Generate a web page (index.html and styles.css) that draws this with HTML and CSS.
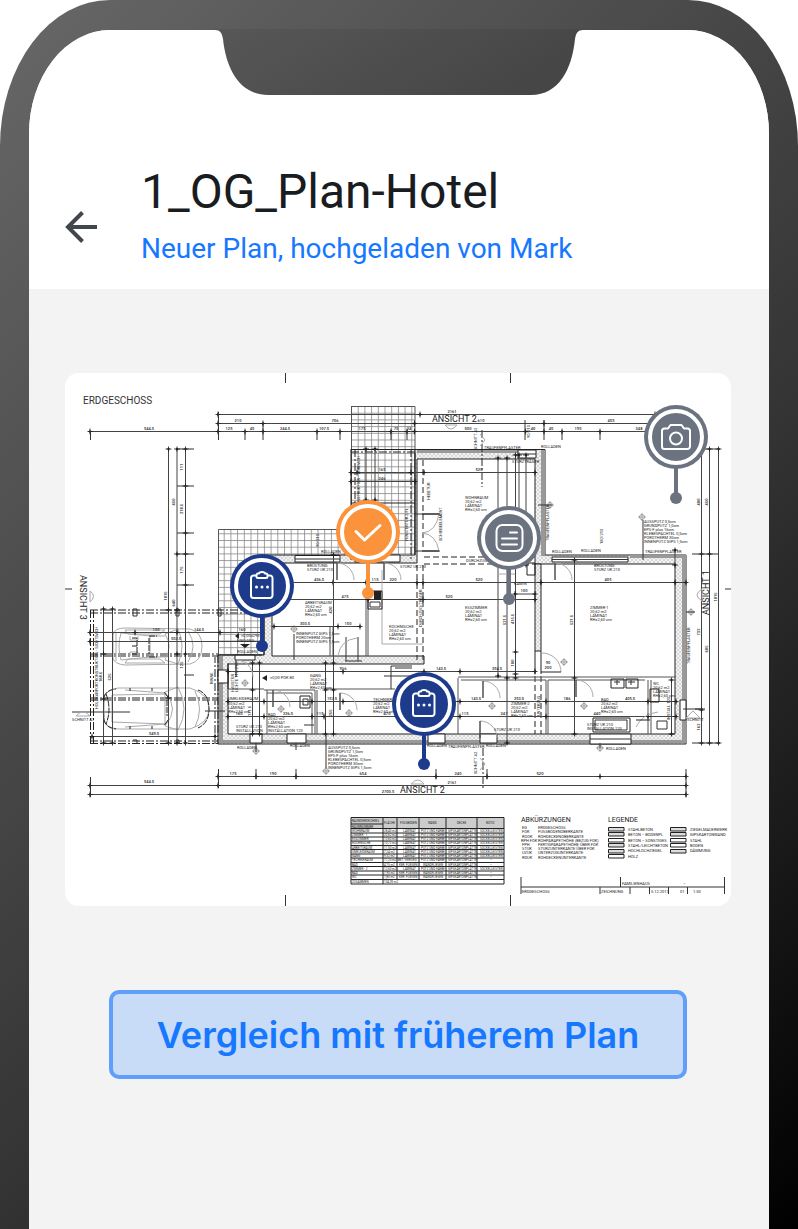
FILE: index.html
```html
<!DOCTYPE html>
<html lang="de">
<head>
<meta charset="utf-8">
<meta name="viewport" content="width=device-width, initial-scale=1">
<title>1_OG_Plan-Hotel</title>
<link rel="stylesheet" href="styles.css">
</head>
<body>
<div class="phone">
  <svg class="notch" viewBox="0 0 368 67" aria-hidden="true">
    <defs><linearGradient id="ng" x1="0" y1="0" x2="1" y2="0.3"><stop offset="0" stop-color="#575757"/><stop offset="1" stop-color="#464646"/></linearGradient></defs>
    <path d="M0 0H368V1C363 1 361 4 360 10C357 40 344 66 316 66H53C25 66 11 40 8 10C7 4 5 1 0 1Z" fill="url(#ng)"/>
  </svg>
  <div class="screen">
    <header class="header">
      <button class="back" type="button" aria-label="Zurück">
        <svg viewBox="0 0 32 32"><path d="M32 16H3M17.500 1.500L3 16L17.500 30.500"/></svg>
      </button>
      <div class="titles">
        <h1>1_OG_Plan-Hotel</h1>
        <p>Neuer Plan, hochgeladen von Mark</p>
      </div>
    </header>
    <main class="content">
      <div class="plan">
        <svg class="drawing" viewBox="65 373 666 533" role="img" aria-label="Grundriss Erdgeschoss">
          <defs>
            <pattern id="grid" x="351" y="406" width="6.700" height="6.700" patternUnits="userSpaceOnUse"><path d="M0 .5H7M.5 0V7" stroke="#888" stroke-width=".8" fill="none"/></pattern>
            <pattern id="hatch" width="4" height="4" patternUnits="userSpaceOnUse"><rect width="4" height="4" fill="#f4f4f4"/><path d="M0 4L4 0M0 0L4 4" stroke="#c4c4c4" stroke-width=".6"/></pattern>
            <marker id="t" markerWidth="8" markerHeight="8" refX="4" refY="4" orient="auto" markerUnits="userSpaceOnUse"><path d="M4 1V7M1.500 4H6.500" stroke="#111" stroke-width=".8"/><circle cx="4" cy="4" r="1.200"/></marker>
            <g id="target"><circle r="2.500"/><path d="M-4 0H4M0-4V4"/></g>
            <g id="note" class="tiny"><text>AUSSPUTZ 0,5cm</text><text y="4">GRUNDPUTZ 1,0cm</text><text y="8">EPS-F plus 16cm</text><text y="12">KLEBESPACHTEL 0,5cm</text><text y="16">POROTHERM 30cm</text><text y="20">INNENPUTZ GIPS 1,5cm</text></g>
            <g id="room" class="tiny"><text y="4">20,62 m2</text><text y="8">LAMINAT</text><text y="12">RH=2,60 cm</text></g>
            <g id="door"><path class="g" d="M0 17V0A17 17 0 0 1 17 17"/><path class="w" d="M0 0V17"/></g>
          </defs>

          <path class="l" d="M285.500 373V383M510.500 373V383M285.500 895V906M510.500 895V906M65 589H72M725 589H731"/>
          <text class="head" x="83" y="404">ERDGESCHOSS</text>

          <!-- paving -->
          <path fill="url(#grid)" d="M351 406H415V554H351ZM218 529H351V556H272V655H218Z"/>
          <path class="w2" d="M351 406.500H415V554M351.500 406V554M218.500 655V529.500H351"/>

          <!-- walls -->
          <path class="wall" d="M415 449.500H545V555H686V744H218V655H264V555H415ZM417 459V563H272V656H424V664H228V734H675V564H535V459Z"/>
          <path fill="#999" d="M417 450H518V453H417ZM541 450H545V556H541ZM630 555H686V558H630ZM682 558H686V740H682ZM218 740H686V743H218ZM219 655H223V740H219Z"/>
          <path class="hat" d="M535 564H541V651H535ZM535 651V674M541 651V674"/>
          <path class="d2" d="M535 676V734M541 676V734M417 565V660M423 565V660M424 557H535M424 564H535M423 460V550"/>
          <path class="w2" d="M264 690H315V734M267 693H312M267 690V734M312 693V734M317 690V734M324 689H395M458 678V734M461 680H546M458 677H676M548 680V734M546 680V734M548 680H645M648 680V734M651 680V734M330 627V656M333 627V656M368 563V656M366 596V656M228 689H264"/>
          <path class="w" fill="#fff" d="M295 555.500H340V562H295ZM355 555H400V562H355ZM552 557H628V562H552ZM518 450H536V458H518ZM235 655H255V660H235ZM250 734H262V743H250ZM287 734H306V743H287ZM428 734H445V743H428ZM480 734H497V743H480ZM590 734H631V744H590ZM680 700H686V720H680ZM218 670H228V683H218Z"/>
          <path class="l" d="M552 559.500H628M295 559H340M590 739H631M518 454H536M415 514H440M415 551H440M346 637V661M358 637V661M345 661H362M391 666H412M391 666V689M384 676H415M395 668H412"/>
          <path class="w" d="M415 453V555M351 449.500H415M351 503H415M264 555V655M351 449V560M218 655H262M228 663V689"/>
          <path class="d1" d="M351 452H415M355 449V560M411 449V560M482 430V487M483 748V790"/>

          <!-- carport -->
          <path class="d1" d="M90 610H262M90 613H262M90 654H218M90 656H218M90 698H218M90 700H218M90 741H218M90 743.500H218M90.500 610V744M93.500 610V744M215 655V744M218 655V744"/>
          <path class="l" d="M72 712H130M205 711H225M133 609V616H137V609ZM176 609V616H179V609ZM218 609V616H221V609ZM133 740H137V744M176 740H179V744"/>
          <g class="g">
            <path d="M113 635Q114 628 125 628L190 629Q202 632 202 646Q202 661 190 664L125 665Q114 664 113 658ZM121 633Q117 646 121 660L150 657V636ZM165 634Q173 646 165 660L178 664Q186 646 178 629ZM150 636H165M150 657H165M125 630H165L160 634H128ZM125 663H165L160 659H128ZM116 632V661M188 631Q198 646 188 662M130 636V640H138V636M130 656V652H138V656"/>
            <path d="M104 697Q106 690 118 688L190 688Q209 694 209 709Q209 723 190 729L118 729Q106 728 104 720ZM165 692Q180 709 165 726L178 730Q190 709 178 687ZM112 695V722L165 724V694ZM125 690L165 693M125 727L165 724M195 691Q204 709 195 727"/>
          </g>
          <path class="car" d="M104 697Q103 709 104 720M106 694Q112 709 106 724M104 697Q106 690 116 689M104 720Q106 728 116 729M168 697L164 692M168 720L164 726M167 700V716M198 690Q209 694 209 709Q209 723 198 728M130 688V691M152 688V691M130 729V726M152 729V726M132 638H137V654H132M149 638V654M132 646H137M149 636H157M149 657H157"/>

          <!-- dimension chains -->
          <g class="dim">
            <path d="M218 414.500H420H655"/><path d="M218 423.500H263H414.500H544H655"/>
            <path d="M90 431.500H218H245H263H317H340H391H407H414.500H525.500H544H562H600H652"/>
            <path d="M168.500 449V610V698V743"/><path d="M177 449V554V610V654V743"/><path d="M185.500 449V486V533V554V585V654V743"/>
            <path d="M701.500 449V554V710V743"/><path d="M709.500 449V554V743"/><path d="M718.500 449V743"/>
            <path d="M90 794.500H686"/><path d="M90 785.500H218H686"/><path d="M218 776.500H256H296H436H487H600H686"/>
            <path d="M351 472.500H357H411H424H535"/><path d="M351 481.500H415"/>
            <path d="M272 582.500H333H366H417H423H541H675H686"/><path d="M272 599.500H368H423H535"/>
            <path d="M228 671.500H343H424H460H535"/><path d="M228 701.500H264H312H343H395H460H546H648H676"/><path d="M228 716.500H264H312H324H460H546H648H676"/>
            <path d="M274 626.500H338H360"/><path d="M90 632.500H135H177H220H262"/><path d="M90 641.500H262"/><path d="M92 736.500H215"/>
            <path d="M103.500 609V654V699V743"/><path d="M112.500 609V743"/>
            <path d="M333.500 555V663V690V734"/><path d="M325.500 663V690V734"/><path d="M252.500 663V690V734"/><path d="M259.500 663V734"/>
            <path d="M507 458V563V678V743"/><path d="M515.500 455V652V674V678"/><path d="M574.500 560V678V734"/><path d="M498 458V676"/><path d="M519 455V565"/><path d="M526 455V565"/>
            <path d="M375 449V500"/><path d="M366 449V500"/><path d="M671.500 680V734"/><path d="M675 550V565"/><path d="M515 594H535"/>
          </g>
          <path class="l" d="M90.500 431V440M218.500 412V440M245 431V440M263 423V440M317 431V440M340 431V440M391 431V440M407 431V440M544 420V440M562 431V440M600 431V440M177 449H194M177 486H194M177 533H194M177 554H194M177 585H194M184 675H194M695 449H720M692 554H718M695 709H705M692 743H720M90.500 777V797M218.500 769V788M256 769V779M296 769V779M436 769V779M487 769V779M686 769V797"/>

          <g class="num">
            <text x="149" y="430">544.5</text><text x="238" y="422">210</text><text x="229" y="430">125</text><text x="252" y="430">45</text><text x="285" y="430">244.5</text><text x="335" y="422">706</text><text x="324" y="430">107.5</text><text x="362" y="430">175</text><text x="396" y="430">75</text><text x="409" y="430">24</text><text x="452" y="413">2161</text><text x="481" y="422">610</text><text x="468" y="430">500</text><text x="533" y="430">40</text><text x="551" y="430">45</text><text x="578" y="430">195</text><text x="611" y="422">455</text><text x="639" y="430">348</text>
            <text x="149" y="783">544.5</text><text x="233" y="775">175</text><text x="273" y="775">190</text><text x="363" y="775">654</text><text x="458" y="775">240</text><text x="540" y="775">520</text><text x="452" y="784">2161</text><text x="388" y="793">2700.5</text>
            <text x="319" y="581">436.5</text><text x="375" y="581">115</text><text x="393" y="581">220</text><text x="479" y="581">520</text><text x="608" y="581">405</text><text x="345" y="598">475</text><text x="449" y="598">520</text><text x="305" y="625">303.5</text><text x="348" y="625">150</text><text x="343" y="670">916</text><text x="441" y="670">143.5</text><text x="497" y="670">354.5</text><text x="332" y="700">157.5</text><text x="476" y="700">143.5</text><text x="519" y="700">253.5</text><text x="567" y="700">186</text><text x="630" y="700">405.5</text><text x="239" y="715">160</text><text x="288" y="715">226.5</text><text x="320" y="715">115</text><text x="387" y="715">470</text><text x="465" y="715">115</text><text x="504" y="715">247</text><text x="597" y="715">440</text><text x="154" y="735">549.5</text><text x="382" y="471">165</text><text x="382" y="480">246</text><text x="479" y="471">520</text><text x="156" y="631">130</text><text x="176" y="640">502.5</text><text x="242" y="631">160</text><text x="199" y="631">144.5</text><text x="524" y="592">100</text><text x="548" y="664">90</text><text x="548" y="669">200</text>
            <text transform="translate(183 467)rotate(-90)">111</text><text transform="translate(183 509)rotate(-90)">218.5</text><text transform="translate(175 502)rotate(-90)">450</text><text transform="translate(183 570)rotate(-90)">175</text><text transform="translate(167 596)rotate(-90)">1015</text><text transform="translate(175 603)rotate(-90)">640</text><text transform="translate(111 677)rotate(-90)">525</text><text transform="translate(102 677)rotate(-90)">168.5</text><text transform="translate(183 665)rotate(-90)">125</text><text transform="translate(506 620)rotate(-90)">521.5</text><text transform="translate(514 619)rotate(-90)">415.5</text><text transform="translate(573 620)rotate(-90)">521.5</text><text transform="translate(514 663)rotate(-90)">100</text><text transform="translate(332 610)rotate(-90)">420</text><text transform="translate(251 711)rotate(-90)">171.5</text><text transform="translate(332 713)rotate(-90)">255</text><text transform="translate(700 502)rotate(-90)">400</text><text transform="translate(708 502)rotate(-90)">450</text><text transform="translate(700 632)rotate(-90)">732</text><text transform="translate(708 649)rotate(-90)">605</text><text transform="translate(717 597)rotate(-90)">1015</text><text transform="translate(700 727)rotate(-90)">162</text>
          </g>

          <!-- view labels -->
          <text class="view" x="432" y="422">ANSICHT 2</text><text class="view" x="400" y="793">ANSICHT 2</text>
          <text class="view" transform="translate(80 575)rotate(90)">ANSICHT 3</text><text class="view" transform="translate(709 615)rotate(-90)">ANSICHT 1</text>
          <path class="g" d="M445 425Q451 433 457 425ZM411 784Q418 776 424 784ZM90 591Q97 596 90 602ZM702 589Q692 595 702 601ZM76 716Q83 708 90 716ZM686 718L693 711L700 718ZM480 434L485 440L480 446M480 758L485 764L480 770"/>

          <!-- interior symbols -->
          <use href="#door" x="337" y="563"/><use href="#door" x="384" y="563"/><use href="#door" x="555" y="563"/><use href="#door" x="340" y="693"/><use href="#door" x="273" y="690"/><use href="#door" x="483" y="681"/><use href="#door" x="576" y="680"/><use href="#door" x="236" y="660"/><use href="#door" x="480" y="721"/>
          <path class="g" d="M439 514Q436 532 422 533M439 551Q436 534 422 533M541 653A19 19 0 0 1 561 672M338 656Q340 640 357 638M382 570V644H423M498 574H515M636 727Q642 714 658 712"/>
          <path class="w" d="M541 672H561M439 514H422M439 551H422M527 563H535V575H527ZM368 591H382V609H368ZM611 679H624V688H611ZM626 679H638V688H626ZM650 689H659V702H650ZM300 696H310V708H300ZM593 718H630V732H593ZM636 720H650"/>
          <path fill="#222" d="M374 591H381V600H374ZM240 644H250L245 648ZM235 636L239 633V639ZM262 678L267 675V681Z"/>
          <path class="l" d="M370 602H380V607H370ZM617 680V685M631 680V685M614 682H620M628 682H635M303 699H308V705H303ZM595 720H627V730H595ZM657 721H667V729H657ZM304 725H314M643 560V520M552 505H538M686 612H695M326 734V768M294 634V660M683 709H703M525 440V420M296 743V750M256 743V752M600 743V748"/>
          <g class="sy"><use href="#target" x="550" y="505"/><use href="#target" x="642" y="517"/><use href="#target" x="691" y="612"/><use href="#target" x="326" y="771"/><use href="#target" x="294" y="629"/><use href="#target" x="245" y="683"/><use href="#target" x="281" y="709"/><use href="#target" x="349" y="713"/><use href="#target" x="492" y="706"/><use href="#target" x="584" y="706"/><use href="#target" x="564" y="662"/><use href="#target" x="256" y="751"/><use href="#target" x="600" y="748"/></g>

          <g class="tiny">
            <text x="465" y="499">WOHNRAUM</text><text x="305" y="604">ARBEITSRAUM</text><text x="465" y="609">ESSZIMMER</text><text x="590" y="609">ZIMMER-1</text><text x="389" y="628">KOCHNISCHE</text><text x="373" y="701">TECHNIKRAUM</text><text x="228" y="700">UMKLEIDERAUM</text><text x="310" y="677">GANG</text><text x="268" y="716">BAD</text><text x="511" y="705">ZIMMER-2</text><text x="601" y="701">BAD</text><text x="653" y="685">WC</text>
            <text x="484" y="449">TRAUFENPFLASTER</text><text x="645" y="553">TRAUFENPFLASTER</text><text x="448" y="748">TRAUFENPFLASTER</text><text x="541" y="448">ROLLADEN</text><text x="321" y="553">ROLLADEN</text><text x="581" y="552">ROLLADEN</text><text x="237" y="749">ROLLADEN</text><text x="290" y="747">ROLLADEN</text><text x="427" y="747">ROLLADEN</text><text x="486" y="747">ROLLADEN</text><text x="606" y="750">ROLLADEN</text><text x="552" y="553">ROLLADEN</text><text x="307" y="567">BRÜSTUNG</text><text x="307" y="571">STURZ UK 210</text><text x="400" y="568">STURZ UK 210</text><text x="512" y="463">STURZTRÄGER</text><text x="594" y="567">BRÜSTUNG</text><text x="594" y="571">STURZ UK 210</text><text x="587" y="726">STURZ UK 210</text><text x="587" y="730">INSTALLATION 120</text><text x="236" y="728">STURZ UK 210</text><text x="236" y="732">INSTALLATION</text><text x="268" y="732">INSTALLATION 120</text><text x="494" y="731">STURZ UK 210</text><text x="237" y="642">EINGANG</text><text x="237" y="653">ROLLADEN</text><text x="241" y="637">±0,00=295</text><text x="270" y="679">±0,00 POK 80</text><text x="296" y="635">INNENPUTZ GIPS 1,5cm</text><text x="296" y="639">POROTHERM 20cm</text><text x="296" y="643">INNENPUTZ GIPS 1,5cm</text><text x="466" y="562">DURCHZUG</text><text x="514" y="585">KAMIN</text><text x="72" y="721">SCHNITT A1</text><text x="687" y="721">SCHNITT</text>
            <text transform="translate(98 709)rotate(-90)">HOLZKARPORTKONSTRUKTION - SICHTDACH</text><text transform="translate(360 507)rotate(-90)">KONSTRUKTION - VORDACH</text><text transform="translate(549 541)rotate(-90)">TRAUFENPFLASTER</text><text transform="translate(690 664)rotate(-90)">TRAUFENPFLASTER</text><text transform="translate(477 450)rotate(-90)">SCHNITT A2</text><text transform="translate(477 774)rotate(-90)">SCHNITT A2</text><text transform="translate(430 500)rotate(-90)">HEBETÜR</text><text transform="translate(442 541)rotate(-90)">SCHIEBEELEMENT</text><text transform="translate(422 627)rotate(-90)">DURCHZUG/TRÄGER</text><text transform="translate(234 692)rotate(-90)">HAUSTÜR</text><text transform="translate(238 692)rotate(-90)">LICHTE 110/210</text><text transform="translate(213 684)rotate(-90)">RINNE</text><text transform="translate(408 541)rotate(-90)">FENSTERTÜR 2.FL</text><text transform="translate(540 716)rotate(-90)">UNTERZUG</text><text transform="translate(670 720)rotate(-90)">INSTALL 120</text><text transform="translate(530 438)rotate(-90)">90/210</text><text transform="translate(603 544)rotate(-90)">180/210</text><text transform="translate(319 547)rotate(-90)">90/210</text>
          </g>
          <use href="#room" x="465" y="499"/><use href="#room" x="305" y="604"/><use href="#room" x="465" y="609"/><use href="#room" x="590" y="609"/><use href="#room" x="389" y="628"/><use href="#room" x="373" y="701"/><use href="#room" x="228" y="701"/><use href="#room" x="310" y="677"/><use href="#room" x="268" y="716"/><use href="#room" x="511" y="705"/><use href="#room" x="601" y="701"/><use href="#room" x="653" y="685"/>
          <use href="#note" x="644" y="523"/><use href="#note" x="328" y="749"/>

          <!-- room schedule -->
          <path fill="#ccc" d="M351 817.500H504V828.500H351Z"/>
          <path class="w" d="M351 817.500H504V884H351ZM351 824H383M351 828.500H504M351 833H504M351 837H504M351 841H504M351 845.500H504M351 849.500H504M351 854H504M351 858H504M351 862.500H504M351 866.500H504M351 871H504M351 875H504M351 879.500H504M383 817V884M397 817V879.500M419 817V879.500M446 817V879.500M477 817V879.500"/>
          <g class="cell"><text x="352" y="822">RAUMVERZEICHNIS</text><text x="352" y="828">RAUMNUMMER</text><text x="384" y="824">FLÄCHE</text><text x="400" y="824">FUSSBODEN</text><text x="428" y="824">WAND</text><text x="457" y="824">DECKE</text><text x="486" y="824">NOTIZ</text>
            <text x="352" y="832">WOHNRAUM</text><text x="352" y="836">ZIMMER - 1</text><text x="352" y="840">ESSZIMMER</text><text x="352" y="844">KOCHNISCHE</text><text x="352" y="849">ARBEITSRAUM</text><text x="352" y="853">UMKLEIDERAUM</text><text x="352" y="857">GANG</text><text x="352" y="861">TECHNIKRAUM</text><text x="352" y="866">BAD</text><text x="352" y="870">ZIMMER - 2</text><text x="352" y="874">BAD</text><text x="352" y="878">WC</text><text x="352" y="883">ZUSAMMEN</text><text x="384" y="883">134,39 m2</text>
            <text x="384" y="832">28,40 m2</text><text x="384" y="836">20,62 m2</text><text x="384" y="840">13,60 m2</text><text x="384" y="844">10,72 m2</text><text x="384" y="849">11,50 m2</text><text x="384" y="853">7,24 m2</text><text x="384" y="857">9,32 m2</text><text x="384" y="861">11,20 m2</text><text x="384" y="866">4,15 m2</text><text x="384" y="870">12,60 m2</text><text x="384" y="874">7,90 m2</text><text x="384" y="878">1,80 m2</text>
            <text x="403" y="832">LAMINAT</text><text x="403" y="836">LAMINAT</text><text x="403" y="840">LAMINAT</text><text x="403" y="844">LAMINAT</text><text x="403" y="849">LAMINAT</text><text x="403" y="853">LAMINAT</text><text x="403" y="857">LAMINAT</text><text x="398" y="861">BET. VERSIEG.</text><text x="399" y="866">KER. FLIESEN</text><text x="403" y="870">LAMINAT</text><text x="399" y="874">KER. FLIESEN</text><text x="399" y="878">KER. FLIESEN</text>
            <text x="421" y="832">PUTZ UND FARBE</text><text x="421" y="836">PUTZ UND FARBE</text><text x="421" y="840">PUTZ UND FARBE</text><text x="421" y="844">PUTZ UND FARBE</text><text x="421" y="849">PUTZ UND FARBE</text><text x="421" y="853">PUTZ UND FARBE</text><text x="421" y="857">PUTZ UND FARBE</text><text x="421" y="861">PUTZ UND FARBE</text><text x="423" y="866">WANDFLIESEN</text><text x="421" y="870">PUTZ UND FARBE</text><text x="423" y="874">WANDFLIESEN</text><text x="423" y="878">WANDFLIESEN</text>
            <text x="448" y="832">GIPSKARTONPLATTE</text><text x="448" y="836">GIPSKARTONPLATTE</text><text x="448" y="840">GIPSKARTONPLATTE</text><text x="448" y="844">GIPSKARTONPLATTE</text><text x="448" y="849">GIPSKARTONPLATTE</text><text x="448" y="853">GIPSKARTONPLATTE</text><text x="448" y="857">GIPSKARTONPLATTE</text><text x="448" y="861">GIPSKARTONPLATTE</text><text x="448" y="866">GIPSKARTONPLATTE</text><text x="448" y="870">GIPSKARTONPLATTE</text><text x="448" y="874">GIPSKARTONPLATTE</text><text x="448" y="878">GIPSKARTONPLATTE</text>
            <text x="480" y="832">SOCKELLEISTEN</text><text x="480" y="836">SOCKELLEISTEN</text><text x="480" y="840">SOCKELLEISTEN</text><text x="480" y="844">SOCKELLEISTEN</text><text x="480" y="849">SOCKELLEISTEN</text><text x="480" y="853">SOCKELLEISTEN</text><text x="480" y="857">SOCKELLEISTEN</text><text x="490" y="861">–</text><text x="490" y="866">–</text><text x="480" y="870">SOCKELLEISTEN</text><text x="490" y="874">–</text><text x="490" y="878">–</text>
          </g>

          <!-- abbreviations and legend -->
          <text class="cap" x="521" y="822">ABKÜRZUNGEN</text><text class="cap" x="608" y="822">LEGENDE</text>
          <g class="tiny">
            <text x="522" y="829">EG</text><text x="538" y="829">ERDGESCHOSS</text><text x="522" y="833">FOK</text><text x="538" y="833">FUSSBODENOBERKANTE</text><text x="522" y="838">ROOK</text><text x="538" y="838">ROHDECKENOBERKANTE</text><text x="521" y="842">RPH FOK</text><text x="538" y="842">ROHPARAPETHÖHE (BEZUG FOK)</text><text x="522" y="846">FPH</text><text x="538" y="846">FERTIGPARAPETHÖHE ÜBER FOK</text><text x="522" y="850">STUK</text><text x="538" y="850">STURZUNTERKANTE ÜBER FOK</text><text x="522" y="854">UZUK</text><text x="538" y="854">UNTERZUGUNTERKANTE</text><text x="522" y="859">RDUK</text><text x="538" y="859">ROHDECKENUNTERKANTE</text>
            <text x="628" y="831">STAHLBETON</text><text x="628" y="836">BETON – BODENPL.</text><text x="628" y="842">BETON – SONSTIGES</text><text x="628" y="847">STAHL/LEICHTBETON</text><text x="628" y="852">HOCHLOCHZIEGEL</text><text x="628" y="858">HOLZ</text><text x="690" y="831">ZIEGELMAUERWERK</text><text x="690" y="836">GIPSKARTONWAND</text><text x="690" y="842">STAHL</text><text x="690" y="847">BODEN</text><text x="690" y="852">DÄMMUNG</text>
            <text x="522" y="893">ERDGESCHOSS</text><text x="601" y="893">ZEICHNUNG</text><text x="622" y="885">FAMILIENHAUS</text><text x="651" y="893">5.12.2017</text><text x="680" y="893">01</text><text x="693" y="893">1:50</text><text x="683" y="885">–</text>
          </g>
          <path class="w" fill="#fff" d="M608.500 838.500H624V842H608.500ZM608.500 854.500H624V858H608.500ZM670.500 838.500H686V842H670.500ZM670.500 843.500H686V847H670.500Z"/>
          <path class="w" fill="#ddd" d="M608.500 827.500H624V831H608.500ZM608.500 832.500H624V836H608.500ZM608.500 843.500H624V847H608.500ZM608.500 849.500H624V853H608.500ZM670.500 827.500H686V831H670.500ZM670.500 832.500H686V836H670.500ZM670.500 849.500H686V853H670.500Z"/>
          <path class="l" d="M521 877V894M620.500 877V887M724.500 877V894M521 887H724M600 887V894M630 887V894M649.500 887V894M668.500 887V894M687.500 887V894"/>
        </svg>

        <button class="pin slate camera" type="button" aria-label="Foto"><svg viewBox="-32 -32 64 100"><path class="stem" d="M0 28V62"/><circle class="dot" cy="61" r="6"/><circle class="disc" r="32"/><circle class="ring" r="26"/><path class="ic" d="M-11.500 -8.500H-8L-5.500 -12H5.500L8 -8.500H11.500A2.500 2.500 0 0 1 14 -6V9.500A2.500 2.500 0 0 1 11.500 12H-11.500A2.500 2.500 0 0 1 -14 9.500V-6A2.500 2.500 0 0 1 -11.500 -8.500Z"/><circle class="ic" cy="1.500" r="6"/></svg></button>
        <button class="pin orange done" type="button" aria-label="Erledigt"><svg viewBox="-32 -32 64 100"><path class="stem" d="M0 28V62"/><circle class="dot" cy="61" r="6"/><circle class="disc" r="32"/><circle class="ring" r="26"/><path class="ic bold" d="M-12 -.5L-3.500 8L12 -6.500"/></svg></button>
        <button class="pin slate form" type="button" aria-label="Formular"><svg viewBox="-32 -32 64 100"><path class="stem" d="M0 28V62"/><circle class="dot" cy="61" r="6"/><circle class="disc" r="32"/><circle class="ring" r="26"/><rect class="ic" x="-12.500" y="-13" width="26" height="26" rx="6"/><path class="ic" d="M1 -5.500H8M-7 .5H8M-7 6.500H8"/></svg></button>
        <button class="pin navy task-a" type="button" aria-label="Aufgabe 1"><svg viewBox="-32 -32 64 100"><path class="stem" d="M0 28V60"/><circle class="dot" cy="60" r="6"/><circle class="disc" r="32"/><circle class="ring" r="26"/><path class="ic" d="M-5.500 -10.500H-8.500A2.500 2.500 0 0 0 -11 -8V9.500A2.500 2.500 0 0 0 -8.500 12H8A2.500 2.500 0 0 0 10.500 9.500V-8A2.500 2.500 0 0 0 8 -10.500H5.500M-3 -12.500C-3 -14.500 3 -14.500 3 -12.500H4A1.500 1.500 0 0 1 5.500 -11V-9.500A1.500 1.500 0 0 1 4 -8H-4A1.500 1.500 0 0 1 -5.500 -9.500V-11A1.500 1.500 0 0 1 -4 -12.500Z"/><path class="ic dots" d="M-5.500 1H-5.500M0 1H0M5.500 1H5.500"/></svg></button>
        <button class="pin navy task-b" type="button" aria-label="Aufgabe 2"><svg viewBox="-32 -32 64 100"><path class="stem" d="M0 28V60"/><circle class="dot" cy="60" r="6"/><circle class="disc" r="32"/><circle class="ring" r="26"/><path class="ic" d="M-5.500 -10.500H-8.500A2.500 2.500 0 0 0 -11 -8V9.500A2.500 2.500 0 0 0 -8.500 12H8A2.500 2.500 0 0 0 10.500 9.500V-8A2.500 2.500 0 0 0 8 -10.500H5.500M-3 -12.500C-3 -14.500 3 -14.500 3 -12.500H4A1.500 1.500 0 0 1 5.500 -11V-9.500A1.500 1.500 0 0 1 4 -8H-4A1.500 1.500 0 0 1 -5.500 -9.500V-11A1.500 1.500 0 0 1 -4 -12.500Z"/><path class="ic dots" d="M-5.500 1H-5.500M0 1H0M5.500 1H5.500"/></svg></button>
      </div>
      <button class="compare" type="button">Vergleich mit früherem Plan</button>
    </main>
  </div>
</div>
</body>
</html>
```
FILE: styles.css
```css
* { box-sizing: border-box; }
body { margin: 0; background: #fff; font-family: Roboto, sans-serif; }
button { margin: 0; padding: 0; border: 0; background: none; font: inherit; cursor: pointer; }

.phone {
  position: relative;
  display: flex;
  min-height: 100vh;
  padding: 30px 29px 0;
  border-radius: 110px 110px 0 0 / 146px 146px 0 0;
  background: linear-gradient(135deg, #686868 0%, #333 60%, #000 100%);
}
.notch { position: absolute; top: 29px; left: 50%; width: 368px; transform: translateX(-50%); }
.screen {
  flex: 1;
  display: flex;
  flex-direction: column;
  overflow: hidden;
  border-radius: 81px 81px 0 0 / 104px 104px 0 0;
  background: #f3f3f3;
}
.header {
  display: flex;
  align-items: center;
  gap: 44px;
  padding: 134px 36px 20px;
  background: #fff;
}
.back { display: flex; width: 32px; height: 32px; margin-top: 20px; }
.back svg { width: 32px; height: 32px; fill: none; stroke: #42474e; stroke-width: 4; }
h1, p { margin: 0; font-weight: 400; }
h1 { font-size: 48px; line-height: 56px; color: #191c20; }
.titles p { margin-top: 9px; font-size: 28px; line-height: 40px; color: #1677ff; }

.content { display: flex; flex-direction: column; align-items: center; padding: 84px 38px 84px 36px; }
.plan { position: relative; width: 100%; border-radius: 14px; background: #fff; }
.drawing { display: block; width: 100%; border-radius: 14px; font-family: Roboto, sans-serif; fill: #222; }

.drawing .l { fill: none; stroke: #333; stroke-width: 1; }
.drawing .w { stroke: #222; stroke-width: 1; }
.drawing .w:not([fill]) { fill: none; }
.w2 { fill: none; stroke: #555; stroke-width: 1; }
.g { fill: none; stroke: #aaa; stroke-width: 1; }
.sy { fill: none; stroke: #555; stroke-width: 0.5; }
.car { fill: none; stroke: #222; stroke-width: 1; stroke-dasharray: 6 1; }
.wall { fill: url(#hatch); fill-rule: evenodd; stroke: #222; stroke-width: 1; }
.hat { fill: url(#hatch); stroke: #222; stroke-width: 1; }
.d1 { fill: none; stroke: #222; stroke-width: 1; stroke-dasharray: 8 2 2 2; }
.d2 { fill: none; stroke: #222; stroke-width: 1; stroke-dasharray: 6 3; }
.dim path { fill: none; stroke: #444; stroke-width: 1; marker: url(#t); }
.head { font-size: 10px; fill: #333; }
.view { font-size: 9px; }
.cap { font-size: 7px; }
.num { font-size: 4px; text-anchor: middle; font-weight: 500; }
.tiny { font-size: 4px; }
.cell { font-size: 3px; }

.pin { position: absolute; display: block; width: 64px; height: 100px; }
.pin svg { display: block; width: 64px; height: 100px; }
.slate { color: #6b7280; }
.orange { color: #fb923c; }
.navy { color: #1e3a8a; }
.disc, .dot { fill: currentColor; }
.stem { stroke: currentColor; stroke-width: 4; }
.ring { fill: none; stroke: #fff; stroke-width: 4; }
.ic { fill: none; stroke: #fff; stroke-width: 2; stroke-linecap: round; stroke-linejoin: round; }
.bold { stroke-width: 3; }
.dots { stroke-width: 3; }
.camera { left: 87%; top: 6%; }
.done { left: 40.700%; top: 23.800%; }
.form { left: 61.800%; top: 25%; }
.task-a { left: 24.800%; top: 34%; }
.task-b { left: 49.100%; top: 56.100%; }

.compare {
  width: 578px;
  max-width: 100%;
  min-height: 89px;
  margin-top: 84px;
  border: 4px solid #5f9efa;
  border-radius: 10px;
  background: #c8dbf7;
  color: #1677ff;
  font-family: Inter, sans-serif;
  font-size: 36px;
  font-weight: 600;
  line-height: 44px;
}
```
